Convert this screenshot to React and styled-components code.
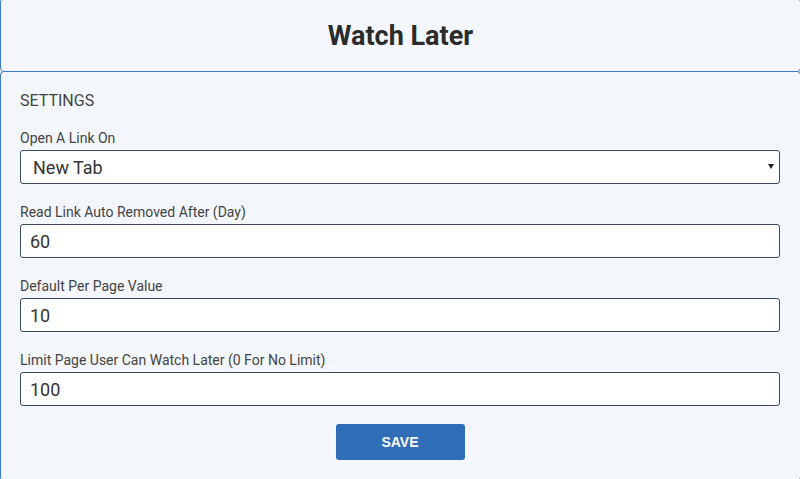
import React from 'react'
import styled, { createGlobalStyle } from 'styled-components'

const GlobalStyle = createGlobalStyle`
  html, body {
    margin: 0;
    padding: 0;
    background: #f3f6fb;
    overflow: hidden;
  }
  body {
    font-family: Roboto, "Liberation Sans", Arial, sans-serif;
    color: #333;
  }
  * {
    box-sizing: border-box;
  }
`

const Page = styled.div`
  width: 801px;
  margin-top: -2px;
`

const Header = styled.header`
  height: 74px;
  border: 1px solid #3b78c6;
  border-radius: 4px;
  background: #f3f6fb;
  display: flex;
  align-items: center;
  justify-content: center;
  padding-top: 1px;

  h1 {
    margin: 0;
    font-size: 27px;
    font-weight: 700;
    color: #2b2b2b;
  }
`

const Panel = styled.section`
  margin-top: -1px;
  height: 410px;
  border: 1px solid #3b78c6;
  border-radius: 4px;
  background: #f3f6fb;
  padding: 19px 20px 0 19px;
`

const SectionTitle = styled.h2`
  margin: 0 0 19px;
  font-size: 16px;
  line-height: 20px;
  font-weight: 400;
  color: #444;
  text-transform: uppercase;
`

const Field = styled.div`
  display: flex;
  flex-direction: column;
  margin-bottom: 20px;
`

const Label = styled.label`
  font-size: 14px;
  line-height: 16px;
  color: #444;
  margin-bottom: 4px;
`

const Input = styled.input`
  height: 34px;
  width: 100%;
  border: 1px solid #3a4a64;
  border-radius: 3px;
  background: #fff;
  padding: 0 0 0 9px;
  font-family: inherit;
  font-size: 18px;
  color: #333;
  outline: none;
`

const SelectWrap = styled.div`
  position: relative;
`

const Select = styled.select`
  appearance: none;
  height: 34px;
  width: 100%;
  border: 1px solid #3a4a64;
  border-radius: 3px;
  background: #fff;
  padding: 0 0 0 12px;
  font-family: inherit;
  font-size: 18px;
  color: #333;
  outline: none;
`

const Caret = styled.span`
  position: absolute;
  right: 6px;
  top: 14px;
  width: 0;
  height: 0;
  border-left: 3px solid transparent;
  border-right: 3px solid transparent;
  border-top: 5px solid #222;
  pointer-events: none;
`

const Actions = styled.div`
  display: flex;
  justify-content: center;
  margin-top: -2px;
`

const SaveButton = styled.button`
  width: 129px;
  height: 36px;
  border: none;
  border-radius: 3px;
  background: #2f6eb6;
  color: #fff;
  font-family: "Liberation Sans", Arial, sans-serif;
  font-weight: 700;
  font-size: 14px;
  cursor: pointer;
`

const fields = [
  { label: 'Read Link Auto Removed After (Day)', value: '60' },
  { label: 'Default Per Page Value', value: '10' },
  { label: 'Limit Page User Can Watch Later (0 For No Limit)', value: '100' },
]

const App = () => {
  return (
    <Page>
      <GlobalStyle />
      <Header>
        <h1>Watch Later</h1>
      </Header>
      <Panel>
        <SectionTitle>Settings</SectionTitle>
        <Field>
          <Label>Open A Link On</Label>
          <SelectWrap>
            <Select defaultValue="new">
              <option value="new">New Tab</option>
              <option value="same">Same Tab</option>
            </Select>
            <Caret />
          </SelectWrap>
        </Field>
        {fields.map((f) => (
          <Field key={f.label}>
            <Label>{f.label}</Label>
            <Input type="text" defaultValue={f.value} />
          </Field>
        ))}
        <Actions>
          <SaveButton>SAVE</SaveButton>
        </Actions>
      </Panel>
    </Page>
  )
}

export default App
